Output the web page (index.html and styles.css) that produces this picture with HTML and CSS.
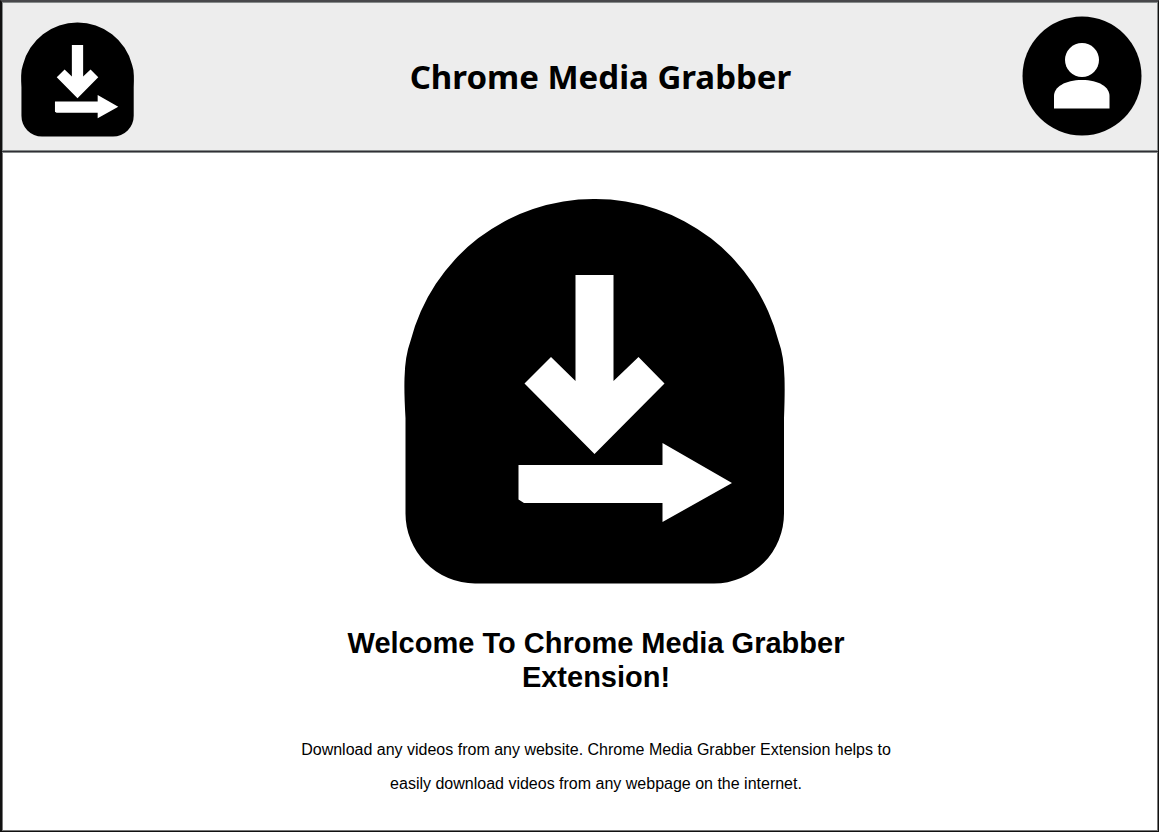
FILE: index.html
```html
<!DOCTYPE html>
<html lang="en">
<head>
<meta charset="utf-8">
<meta name="viewport" content="width=device-width, initial-scale=1">
<title>Chrome Media Grabber</title>
<link rel="stylesheet" href="styles.css">
</head>
<body>
<svg width="0" height="0" class="sprite" aria-hidden="true">
  <symbol id="logo" viewBox="0 0 381 386">
    <path fill="#000" d="M190.500 1A189 189 0 0 1 374.500 143Q380 158 380.500 180Q381 195 380 220V315A70 70 0 0 1 310 385.500H71A70 70 0 0 1 1.500 315V220Q0 195 0.500 180Q1 158 6.500 143A189 189 0 0 1 190.500 1Z"/>
    <path fill="#fff" d="M171.500 77H209.500V183L234.500 159L260.500 185.500L190.500 256L120.500 185.500L147 159L171.500 183Z"/>
    <path fill="#fff" d="M114.500 267H258.500V245L328 285L258.500 324V305H120L114.500 301.500Z"/>
  </symbol>
</svg>
<div class="page">
  <header class="header">
    <svg class="header-logo" role="img" aria-label="Chrome Media Grabber logo"><use href="#logo"/></svg>
    <h1 class="title">Chrome Media Grabber</h1>
    <svg class="avatar" viewBox="0 0 120 120" role="img" aria-label="Profile">
      <circle cx="60" cy="60" r="59.500"/>
      <g fill="#fff">
        <circle cx="60" cy="44" r="17"/>
        <path d="M32 92.500V80C32 71 43 64 60 64S87.500 71 87.500 80V92.500Z"/>
      </g>
    </svg>
  </header>
  <main class="main">
    <svg class="hero-logo" aria-hidden="true"><use href="#logo"/></svg>
    <h2 class="welcome">Welcome To Chrome Media Grabber Extension!</h2>
    <p class="intro">Download any videos from any website. Chrome Media Grabber Extension helps to easily download videos from any webpage on the internet.</p>
  </main>
</div>
</body>
</html>
```
FILE: styles.css
```css
* {
  box-sizing: border-box;
}

body {
  margin: 0;
  background: #fff;
  color: #000;
  font-family: "Liberation Sans", Arial, sans-serif;
}

.sprite {
  position: absolute;
}

.page {
  display: flex;
  flex-direction: column;
  min-height: 100vh;
  border: solid #111;
  border-width: 2px 1px 1px 2px;
  border-top-color: #48484b;
  box-shadow: inset 0 0 0 1px #777;
}

.header {
  display: flex;
  align-items: center;
  justify-content: space-between;
  padding: 12px 16px 14px 19px;
  background: #ededed;
  border-bottom: 1px solid #303035;
  box-shadow: inset 0 0 0 1px #868a8a, 0 1px #868a8a;
}

.header-logo {
  width: 113px;
  height: 115px;
  margin-top: 8px;
}

.title {
  margin: 0;
  padding: 2px 0 0 45px;
  font: bold 33px/40px Tahoma, "Noto Sans", sans-serif;
}

.avatar {
  width: 120px;
  height: 120px;
}

.main {
  flex: 1;
  display: flex;
  flex-direction: column;
  align-items: center;
  padding: 46px 0 28px 32px;
  text-align: center;
}

.hero-logo {
  width: 381px;
  height: 386px;
  margin-right: 3px;
}

.welcome {
  max-width: 600px;
  margin: 42px 0 0;
  font-size: 29px;
  line-height: 34px;
}

.intro {
  max-width: 600px;
  margin: 39px 0 0;
  font-size: 16px;
  line-height: 34px;
}
```
